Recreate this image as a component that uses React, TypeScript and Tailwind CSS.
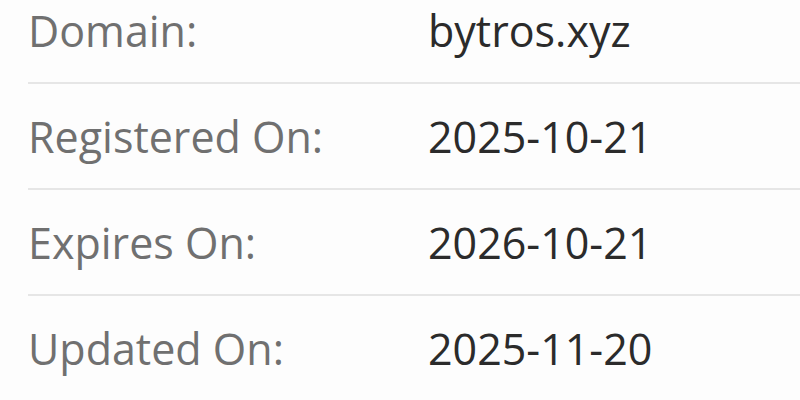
const rows = [
  { label: 'Domain:', value: 'bytros.xyz' },
  { label: 'Registered On:', value: '2025-10-21' },
  { label: 'Expires On:', value: '2026-10-21' },
  { label: 'Updated On:', value: '2025-11-20' },
];

export default function App() {
  return (
    <div className="w-[800px] h-[400px] overflow-hidden bg-[#fdfdfd] font-['Open_Sans',sans-serif]">
      <div className="-mt-[22px] pl-[28px]">
        {rows.map((row, idx) => (
          <div
            key={idx}
            className={`flex pt-[31px] pb-[30px] text-[43px] leading-none ${
              idx < rows.length - 1 ? 'border-b-2 border-[#e6e6e6]' : ''
            }`}
          >
            <div className="w-[400px] text-[#707070]">{row.label}</div>
            <div className="text-[#2b2b2b]">{row.value}</div>
          </div>
        ))}
      </div>
    </div>
  );
}
